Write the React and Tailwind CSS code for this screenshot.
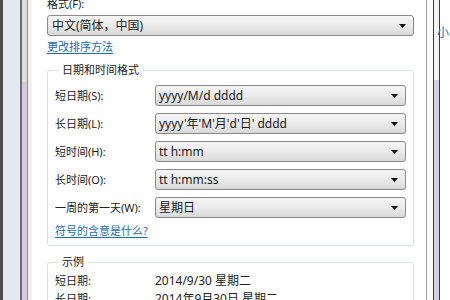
import React from 'react';

const FONT = { fontFamily: '"Noto Sans", "Noto Sans CJK SC", sans-serif' };

const rows = [
  { label: '短日期(S):', value: 'yyyy/M/d dddd' },
  { label: '长日期(L):', value: "yyyy'年'M'月'd'日' dddd" },
  { label: '短时间(H):', value: 'tt h:mm' },
  { label: '长时间(O):', value: 'tt h:mm:ss' },
  { label: '一周的第一天(W):', value: '星期日' },
];

const Arrow = () => (
  <svg width="7" height="4" viewBox="0 0 7 4" className="shrink-0">
    <path d="M0 0 H7 L3.5 4 Z" fill="#111" />
  </svg>
);

const Combo = ({ value, className = '' }) => (
  <div
    className={`h-[21px] flex items-center justify-between pl-[3px] pr-[7px] border border-[#8a8a8a] rounded-[3px] bg-gradient-to-b from-[#f5f5f5] via-[#ebebeb] to-[#d8d8d8] text-[12px] text-[#1a1a1a] ${className}`}
  >
    <span className="leading-[14px] whitespace-nowrap">{value}</span>
    <Arrow />
  </div>
);

const App = () => {
  return (
    <div className="w-[450px] h-[300px] overflow-hidden flex bg-white" style={FONT}>
      {/* left window edge */}
      <div className="w-[3px] bg-[#4d4d4d]" />
      <div className="w-[17px] bg-[#e5e9ef]" />
      <div className="w-[2px] bg-[#6e6e6e]" />
      <div className="w-[5px] flex flex-col">
        <div className="h-[82px] bg-[#dcdbe0]" />
        <div className="flex-1 bg-[#d5cbe0]" />
      </div>
      <div className="w-px bg-[#8c8c8c]" />
      <div className="w-[4px] bg-[#f1f1f1]" />

      {/* dialog body */}
      <div className="w-[395px] pl-[15px] pr-[12px] text-[11px] text-[#222]">
        <div className="leading-[14px] -mt-[3px]">格式(F):</div>
        <Combo value="中文(简体，中国)" className="mt-[4px] pl-[4px]" />
        <div className="mt-[4px] leading-[14px] text-[#1d6cc0] underline underline-offset-2 decoration-[#1d6cc0]">
          更改排序方法
        </div>

        <fieldset className="mt-[9px] border border-[#d9e0e5] rounded-[3px] px-[7px] pb-[7px]">
          <legend className="ml-[3px] px-[4px] leading-[14px]">日期和时间格式</legend>
          <div className="mt-[8px] flex flex-col gap-[7px]">
            {rows.map(r => (
              <div key={r.label} className="flex items-center">
                <div className="w-[100px] leading-[14px] whitespace-nowrap">{r.label}</div>
                <Combo value={r.value} className="flex-1" />
              </div>
            ))}
          </div>
          <div className="mt-[6px] leading-[14px] text-[#1d6cc0] underline underline-offset-2 decoration-[#1d6cc0]">
            符号的含意是什么?
          </div>
        </fieldset>

        <fieldset className="mt-[9px] border border-[#d9e0e5] rounded-[3px] px-[7px] pb-[7px]">
          <legend className="ml-[3px] px-[4px] leading-[14px]">示例</legend>
          <div className="mt-[5px] flex flex-col gap-[4px]">
            <div className="flex leading-[14px]">
              <div className="w-[100px]">短日期:</div>
              <div className="text-[12px]">2014/9/30 星期二</div>
            </div>
            <div className="flex leading-[14px]">
              <div className="w-[100px]">长日期:</div>
              <div className="text-[12px]">2014年9月30日 星期二</div>
            </div>
          </div>
        </fieldset>
      </div>

      {/* right window edge */}
      <div className="w-px bg-[#a3a3a3]" />
      <div className="w-[6px] bg-[#fbfbfb]" />
      <div className="w-px bg-[#3c3c3c]" />
      <div className="relative flex">
        <div className="w-[5px] flex flex-col">
          <div className="h-[80px] bg-[#f4f2f6]" />
          <div className="flex-1 bg-[#d8cde2]" />
        </div>
        <div className="w-px bg-[#3c3c3c]" />
        <div className="w-[10px] bg-white" />
        <span className="absolute left-[3px] top-[26px] text-[12px] leading-[14px] text-[#2a6fc0] whitespace-nowrap">小</span>
      </div>
    </div>
  );
};

export default App;
